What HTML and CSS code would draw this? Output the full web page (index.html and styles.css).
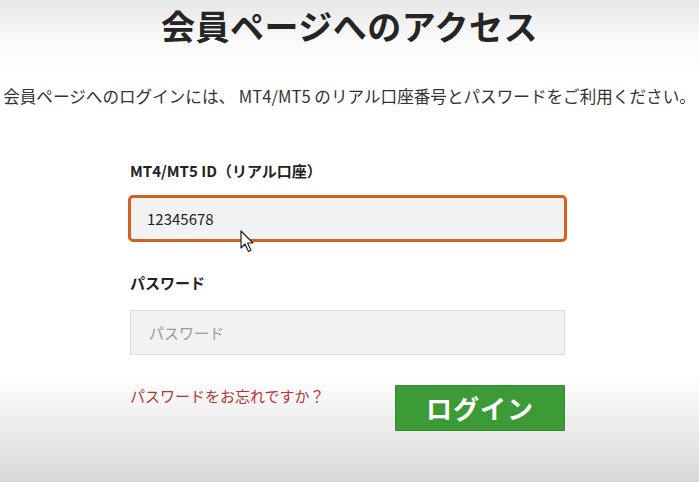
FILE: index.html
```html
<!DOCTYPE html>
<html lang="ja">
<head>
<meta charset="utf-8">
<link rel="stylesheet" href="styles.css">
</head>
<body>
<main class="page">
  <h1 class="title">会員ページへのアクセス</h1>
  <p class="lead">会員ページへのログインには、 MT4/MT5 のリアル口座番号とパスワードをご利用ください。</p>
  <form class="form">
    <label class="label">MT4/MT5 ID（リアル口座）</label>
    <div class="field field-active">
      <span class="value">12345678</span>
      <svg class="cursor" width="16" height="24" viewBox="0 0 16 24"><path d="M1 1 L1 18 L5 14 L8.5 21.5 L11 20.3 L7.6 13 L13 13 Z" fill="#fff" stroke="#222" stroke-width="1.2" stroke-linejoin="round"/></svg>
    </div>
    <label class="label label-pw">パスワード</label>
    <div class="field field-pw"><span class="placeholder">パスワード</span></div>
    <div class="actions">
      <a class="forgot">パスワードをお忘れですか？</a>
      <button type="button" class="login">ログイン</button>
    </div>
  </form>
</main>
</body>
</html>
```
FILE: styles.css
```css
html, body {
  margin: 0;
  padding: 0;
}
body {
  width: 699px;
  height: 482px;
  overflow: hidden;
  font-family: "Noto Sans CJK JP", "Noto Sans", sans-serif;
  background: linear-gradient(to bottom, #e6e6e6 0px, #fafafa 40px, #ffffff 70px, #ffffff 375px, #f4f4f4 405px, #d8d8d8 482px);
  color: #222;
}
.page {
  display: flex;
  flex-direction: column;
  align-items: center;
}
.title {
  margin: 5px 0 0;
  font-size: 34px;
  line-height: 42px;
  font-weight: 700;
  color: #252525;
  letter-spacing: 0.5px;
}
.lead {
  margin: 37px 0 0;
  font-size: 16.6px;
  line-height: 24px;
  color: #333;
  white-space: nowrap;
}
.form {
  width: 439px;
  margin: 53px 0 0 -4px;
  display: flex;
  flex-direction: column;
}
.label {
  font-size: 15px;
  font-weight: 700;
  line-height: 20px;
  margin-left: 2px;
  color: #222;
}
.field {
  position: relative;
  box-sizing: border-box;
  background: #f2f2f2;
  display: flex;
  align-items: center;
}
.field-active {
  margin-top: 14px;
  height: 47px;
  border: 3px solid #d4621f;
  border-radius: 5px;
  padding-left: 16px;
}
.value {
  font-size: 15px;
  color: #222;
}
.cursor {
  position: absolute;
  left: 109px;
  top: 32px;
}
.label-pw {
  margin-top: 31px;
}
.field-pw {
  margin: 17px 0 0 2px;
  width: 435px;
  height: 45px;
  border: 1px solid #dcdcdc;
  padding-left: 18px;
}
.placeholder {
  font-size: 15px;
  color: #9a9a9a;
}
.actions {
  margin-top: 30px;
  display: flex;
  justify-content: space-between;
  align-items: flex-start;
  padding-left: 2px;
}
.forgot {
  font-size: 15px;
  line-height: 22px;
  color: #b4373a;
}
.login {
  width: 170px;
  height: 46px;
  margin-right: 2px;
  background: #3c9b37;
  border: 1px solid #2f8a2c;
  border-radius: 1px;
  color: #fff;
  font-family: "Noto Sans CJK JP", sans-serif;
  font-size: 26px;
  font-weight: 700;
  letter-spacing: 1px;
  line-height: 1;
  padding: 0;
}
```
